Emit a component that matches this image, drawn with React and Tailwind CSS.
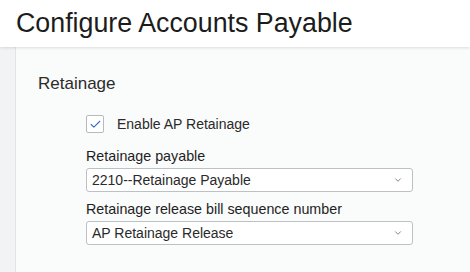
import { Check, ChevronDown } from 'lucide-react';

function SelectBox({ value }) {
  return (
    <div className="flex h-6 w-[327px] items-center justify-between rounded-[3px] border border-[#bcc1c6] bg-white pl-[5px] pr-[9px]">
      <span className="text-[14px] leading-none text-[#2a2a2a]">{value}</span>
      <ChevronDown size={10} strokeWidth={2} className="text-[#6b6f73]" />
    </div>
  );
}

function App() {
  return (
    <div className="h-[272px] w-[470px] overflow-hidden bg-white font-['Liberation_Sans',Arial,sans-serif] text-[#222]">
      <header className="relative z-10 flex h-[47px] items-center bg-white pl-4 shadow-[0_1px_3px_rgba(0,0,0,0.12)]">
        <h1 className="text-[26.8px] leading-none text-[#1c1c1c]">Configure Accounts Payable</h1>
      </header>
      <div className="flex h-[225px]">
        <div className="w-4 border-r border-[#e2e5e8] bg-[#f1f3f5]" />
        <main className="flex-1 bg-[#fafbfb] pl-[22px] pt-[27px]">
          <h2 className="text-[17px] leading-5 text-[#2b2b2b]">Retainage</h2>
          <div className="mt-[21px] pl-[48px]">
            <label className="flex items-center gap-[13px]">
              <span className="flex h-[18px] w-[18px] items-center justify-center rounded-[2px] border border-[#b5bac0] bg-white">
                <Check size={13} strokeWidth={2} className="text-[#3a6cc6]" />
              </span>
              <span className="text-[14px] leading-4 text-[#2a2a2a]">Enable AP Retainage</span>
            </label>
            <div className="mt-[15px] text-[14.3px] leading-4 text-[#1e1e1e]">Retainage payable</div>
            <div className="mt-1">
              <SelectBox value="2210--Retainage Payable" />
            </div>
            <div className="mt-[9px] text-[14.3px] leading-4 text-[#1e1e1e]">Retainage release bill sequence number</div>
            <div className="mt-1">
              <SelectBox value="AP Retainage Release" />
            </div>
          </div>
        </main>
      </div>
    </div>
  );
}

export default App;
